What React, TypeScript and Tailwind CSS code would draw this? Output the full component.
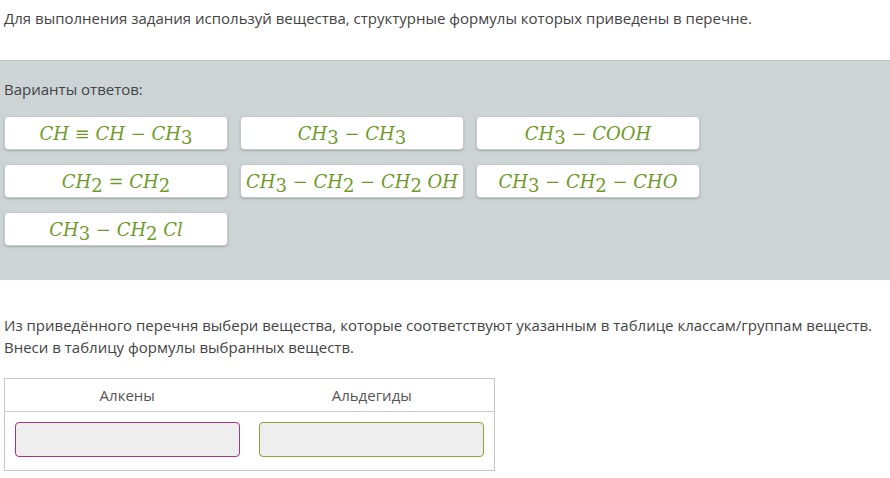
import React from "react";

const F = ({ parts }: { parts: (string | [string])[] }) => (
  <span className="italic text-[19px] text-[#6f9a2a]" style={{ fontFamily: '"DejaVu Serif","Liberation Serif",serif', fontSize: 18 }}>
    {parts.map((p, i) =>
      typeof p === "string" ? (
        <span key={i}>{p}</span>
      ) : (
        <span key={i} className="not-italic relative top-[4px] text-[18px]">{p[0]}</span>
      )
    )}
  </span>
);

const Btn = ({ children }: { children: React.ReactNode }) => (
  <div className="h-[34px] bg-white rounded-[4px] border border-[#c3c8c9] shadow-[0_1px_2px_rgba(0,0,0,0.2)] flex items-center justify-center">
    {children}
  </div>
);

export default function App() {
  return (
    <div className="w-[890px] h-[478px] bg-white text-[#444] text-[15px]" style={{ fontFamily: '"Open Sans",sans-serif' }}>
      <div className="h-[60px] px-[4px] pt-[7px] leading-[22px]">
        Для выполнения задания используй вещества, структурные формулы которых приведены в перечне.
      </div>
      <div className="h-[220px] bg-[#ccd4d6] px-[4px] pt-[17px] border-t border-[#bcc5c7]">
        <div className="leading-[22px] mb-[16px]">Варианты ответов:</div>
        <div className="grid grid-cols-[224px_224px_224px] gap-x-[12px] gap-y-[14px]">
          <Btn><F parts={["CH ≡ CH − CH", ["3"]]} /></Btn>
          <Btn><F parts={["CH", ["3"], " − CH", ["3"]]} /></Btn>
          <Btn><F parts={["CH", ["3"], " − COOH"]} /></Btn>
          <Btn><F parts={["CH", ["2"], " = CH", ["2"]]} /></Btn>
          <Btn><F parts={["CH", ["3"], " − CH", ["2"], " − CH", ["2"], " OH"]} /></Btn>
          <Btn><F parts={["CH", ["3"], " − CH", ["2"], " − CHO"]} /></Btn>
          <Btn><F parts={["CH", ["3"], " − CH", ["2"], " Cl"]} /></Btn>
        </div>
      </div>
      <div className="px-[4px] pt-[34px] leading-[22px]">
        Из приведённого перечня выбери вещества, которые соответствуют указанным в таблице классам/группам веществ. Внеси в таблицу формулы выбранных веществ.
      </div>
      <div className="ml-[4px] mt-[20px] w-[491px] border border-[#c8c8c8]">
        <div className="grid grid-cols-2 h-[33px] items-center text-center border-b border-[#c8c8c8] text-[#555]">
          <div>Алкены</div>
          <div>Альдегиды</div>
        </div>
        <div className="grid grid-cols-2 gap-[19px] px-[10px] pt-[10px] pb-[13px]">
          <div className="h-[35px] rounded-[4px] border border-[#b0307a] bg-[#eeeeee]" />
          <div className="h-[35px] rounded-[4px] border border-[#8fa33a] bg-[#eeeeee]" />
        </div>
      </div>
    </div>
  );
}
